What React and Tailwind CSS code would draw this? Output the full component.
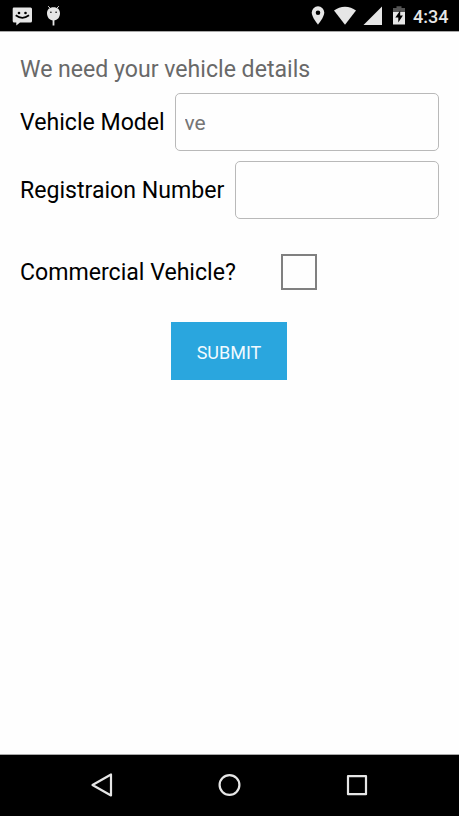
function StatusBar() {
  return (
    <header className="flex h-8 shrink-0 items-start border-b border-[#a8a8a8] bg-black pl-3 pr-3 text-[#e6e6e6]">
      <svg className="mt-[6px] h-5 w-5" viewBox="0 0 20 20" fill="currentColor" aria-hidden="true">
        <path d="M1.500 1.500h17q1.500 0 1.500 1.500v12q0 1.500-1.500 1.500H8L4.300 19.500v-3H2.200Q.7 16.500.7 15V3q0-1.500.8-1.500z" />
        <g fill="#000">
          <circle cx="7" cy="7" r="1.300" />
          <circle cx="13.500" cy="7" r="1.300" />
        </g>
        <path d="M3.700 9.300Q10.300 14.300 17 9.300" fill="none" stroke="#000" strokeWidth="1.700" />
      </svg>
      <svg className="ml-[14px] mt-[5px] h-[21px] w-4" viewBox="0 0 16 21" fill="currentColor" aria-hidden="true">
        <path d="M2.200 1.200l2 2.200M12.800 1.200l-2 2.200" stroke="currentColor" strokeWidth="1" />
        <path d="M7.500 2.300C11.500 2.300 14 4.600 14 8.300c0 3.500-2 7.200-6.500 7.200S1 11.800 1 8.300c0-3.700 2.500-6 6.500-6z" />
        <path d="M6.600 15h1.800v5.500H6.600z" />
        <circle cx="4.900" cy="7.200" r=".8" fill="#000" />
        <circle cx="10.100" cy="7.200" r=".8" fill="#000" />
      </svg>

      <svg className="ml-auto mt-[6px] h-[19px] w-[14px]" viewBox="0 0 14 19" fill="currentColor" aria-hidden="true">
        <path fillRule="evenodd" d="M7 .3A6.300 6.300 0 0 0 .7 6.600C.7 11.300 7 18.700 7 18.700s6.300-7.400 6.300-12.100A6.300 6.300 0 0 0 7 .3zM7 4.400a2.300 2.300 0 1 1 0 4.600 2.300 2.300 0 0 1 0-4.600z" />
      </svg>
      <svg className="ml-[9px] mt-[6px] h-[19px] w-[22px]" viewBox="0 0 22 19" fill="currentColor" aria-hidden="true">
        <path d="M11 18.800L0 4.500Q4.800.7 11 .7T22 4.500z" />
      </svg>
      <svg className="ml-[7px] mt-[6px] h-[19px] w-[19px]" viewBox="0 0 19 19" fill="currentColor" aria-hidden="true">
        <path d="M19 .5V19H.5z" />
      </svg>
      <svg className="ml-[11px] mt-[6px] h-[19px] w-3" viewBox="0 0 12 19" fill="currentColor" aria-hidden="true">
        <path d="M3.500.3h5v1.700H12V6H0V2h3.500z" fill="#555" />
        <path d="M0 6h12v12.500H0z" />
        <path d="M7.200 4.500L2.300 11.500h3v5l4.600-7h-2.700z" fill="#000" />
      </svg>
      <time className="ml-2 mt-[5px] w-[34px] whitespace-nowrap text-[18px] font-medium leading-[23px]">4:34</time>
    </header>
  );
}

function NavigationBar() {
  return (
    <nav className="flex h-[62px] shrink-0 items-center justify-between border-t border-[#a8a8a8] bg-black pb-[2px] pl-[90px] pr-[90px] text-[#e6e6e6]">
      <button aria-label="Back">
        <svg className="h-6 w-6" viewBox="0 0 24 24" fill="none" stroke="currentColor" strokeWidth="2.200" strokeLinejoin="round">
          <path d="M21 1.500v21L2.500 12z" />
        </svg>
      </button>
      <button aria-label="Home">
        <svg className="h-6 w-6" viewBox="0 0 24 24" fill="none" stroke="currentColor" strokeWidth="2.200">
          <circle cx="11.500" cy="12" r="9.900" />
        </svg>
      </button>
      <button aria-label="Recent apps">
        <svg className="h-6 w-6" viewBox="0 0 24 24" fill="none" stroke="currentColor" strokeWidth="2.200" strokeLinejoin="round">
          <path d="M3 3.200h18v18H3z" />
        </svg>
      </button>
    </nav>
  );
}

export default function App() {
  return (
    <div className="flex h-screen flex-col bg-[#fefefe] font-['Roboto',sans-serif] text-[23.1px] text-black">
      <StatusBar />
      <main className="flex flex-1 flex-col pl-5 pr-[20.5px] pt-[22px]">
        <h1 className="h-[39px] whitespace-nowrap leading-8 text-[#696969]">We need your vehicle details</h1>
        <label className="flex h-[58px] items-center">
          <span className="w-[154.500px] whitespace-nowrap pt-[2px]">Vehicle Model</span>
          <input
            className="h-[58px] min-w-0 flex-1 rounded-[5px] border border-[#b9b9b9] px-[9px] pt-[2px] text-[21px] text-[#757575] outline-none"
            defaultValue="ve"
          />
        </label>
        <label className="mt-[10px] flex h-[58px] items-center">
          <span className="w-[214.500px] whitespace-nowrap pt-[2px]">Registraion Number</span>
          <input className="h-[58px] min-w-0 flex-1 rounded-[5px] border border-[#b9b9b9] px-[9px] text-[21px] outline-none" />
        </label>
        <label className="mt-[34px] flex h-[37px] items-center">
          <span className="w-[261px] whitespace-nowrap pt-[3px]">Commercial Vehicle?</span>
          <input type="checkbox" className="h-9 w-9 appearance-none border-2 border-[#808080]" />
        </label>
        <button className="ml-[151px] mt-8 h-[58px] w-[116px] bg-[#2aa6de] pt-[2px] text-[18px] text-[#f1faff]">SUBMIT</button>
      </main>
      <NavigationBar />
    </div>
  );
}
